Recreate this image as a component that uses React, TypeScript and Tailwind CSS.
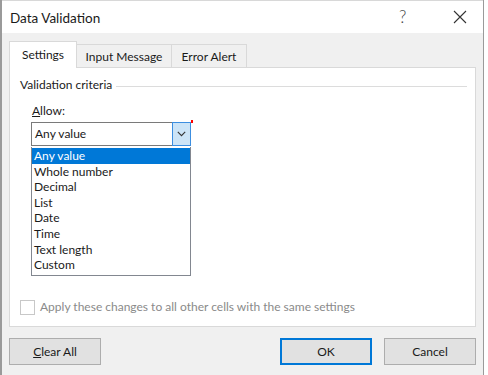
import React from "react";

const items = ["Any value", "Whole number", "Decimal", "List", "Date", "Time", "Text length", "Custom"];

export default function App() {
  return (
    <div
      className="w-[488px] h-[375px] overflow-hidden bg-white flex"
      style={{ fontFamily: 'Lato, "Noto Sans", sans-serif' }}
    >
      <div className="w-[484px] h-[375px] border-l-2 border-r border-[#9a9a9a] bg-[#f0f0f0] flex flex-col text-[12px] leading-[16px] text-[#1a1a1a]">
        {/* title bar */}
        <div className="h-[33px] bg-white border-t border-[#d8d8d8] flex items-center pl-[8px] shrink-0">
          <span className="text-[13.5px] flex-1 pt-[1px]">Data Validation</span>
          <span className="text-[17px] text-[#444] font-light w-[14px] mr-[40px]">?</span>
          <svg width="14" height="14" viewBox="0 0 14 14" className="mr-[16px]">
            <path d="M1 1 L13 13 M13 1 L1 13" stroke="#333" strokeWidth="1.1" />
          </svg>
        </div>
        {/* tabs */}
        <div className="flex items-end pl-[7px] h-[35px] shrink-0 relative z-10">
          <div className="w-[68px] h-[27px] bg-white border border-b-0 border-[#d9d9d9] flex items-center justify-center">
            Settings
          </div>
          <div className="w-[95px] h-[24px] border border-l-0 border-b-0 border-[#d9d9d9] flex items-center justify-center">
            Input Message
          </div>
          <div className="w-[75px] h-[24px] border border-l-0 border-b-0 border-[#d9d9d9] flex items-center justify-center">
            Error Alert
          </div>
        </div>
        {/* panel */}
        <div className="ml-[7px] w-[467px] h-[260px] bg-white border border-[#d9d9d9] -mt-[1px] flex flex-col relative">
          <div className="flex items-center pl-[10px] pr-[8px] pt-[9px]">
            <span>Validation criteria</span>
            <div className="flex-1 h-px bg-[#dcdcdc] ml-[4px] mt-[2px]" />
          </div>
          <div className="pl-[22px] pt-[10px]">
            <span>
              <span className="underline">A</span>llow:
            </span>
          </div>
          <div className="ml-[21px] mt-[3px] w-[160px] relative">
            <div className="h-[24px] border border-[#7a7a7a] flex items-stretch">
              <span className="flex-1 pl-[3px] flex items-center">Any value</span>
              <div className="w-[19px] bg-[#cce4f7] border border-[#3c8ee0] -m-px flex items-center justify-center">
                <svg width="9" height="6" viewBox="0 0 9 6">
                  <path d="M0.8 0.8 L4.5 4.6 L8.2 0.8" stroke="#333" strokeWidth="1.1" fill="none" />
                </svg>
              </div>
            </div>
            <div className="absolute right-[-2px] top-[-2px] w-[2px] h-[3px] bg-[#ff0000]" />
            <div className="border border-[#828790] border-t-0 pt-px pb-[2px] mt-[1px] bg-white">
              {items.map((t, i) => (
                <div
                  key={t}
                  className={
                    i === 0
                      ? "h-[15.6px] leading-[15.6px] pl-[2px] bg-[#0078d7] text-white"
                      : "h-[15.6px] leading-[15.6px] pl-[2px]"
                  }
                >
                  {t}
                </div>
              ))}
            </div>
          </div>
          <div className="absolute left-[10px] top-[231px] flex items-center">
            <div className="w-[15px] h-[15px] border border-[#c8c8c8] bg-white" />
            <span className="ml-[5px] text-[#8a8a8a]">Apply these changes to all other cells with the same settings</span>
          </div>
        </div>
        {/* buttons */}
        <div className="flex items-center pl-[7px] pt-[11px]">
          <div className="w-[92px] h-[27px] border border-[#adadad] bg-[#e1e1e1] flex items-center justify-center">
            <span>
              <span className="underline">C</span>lear All
            </span>
          </div>
          <div className="flex-1" />
          <div className="w-[92px] h-[27px] border-2 border-[#0078d7] bg-[#e1e1e1] flex items-center justify-center mr-[12px]">
            OK
          </div>
          <div className="w-[92px] h-[27px] border border-[#adadad] bg-[#e1e1e1] flex items-center justify-center mr-[7px]">
            Cancel
          </div>
        </div>
      </div>
    </div>
  );
}
